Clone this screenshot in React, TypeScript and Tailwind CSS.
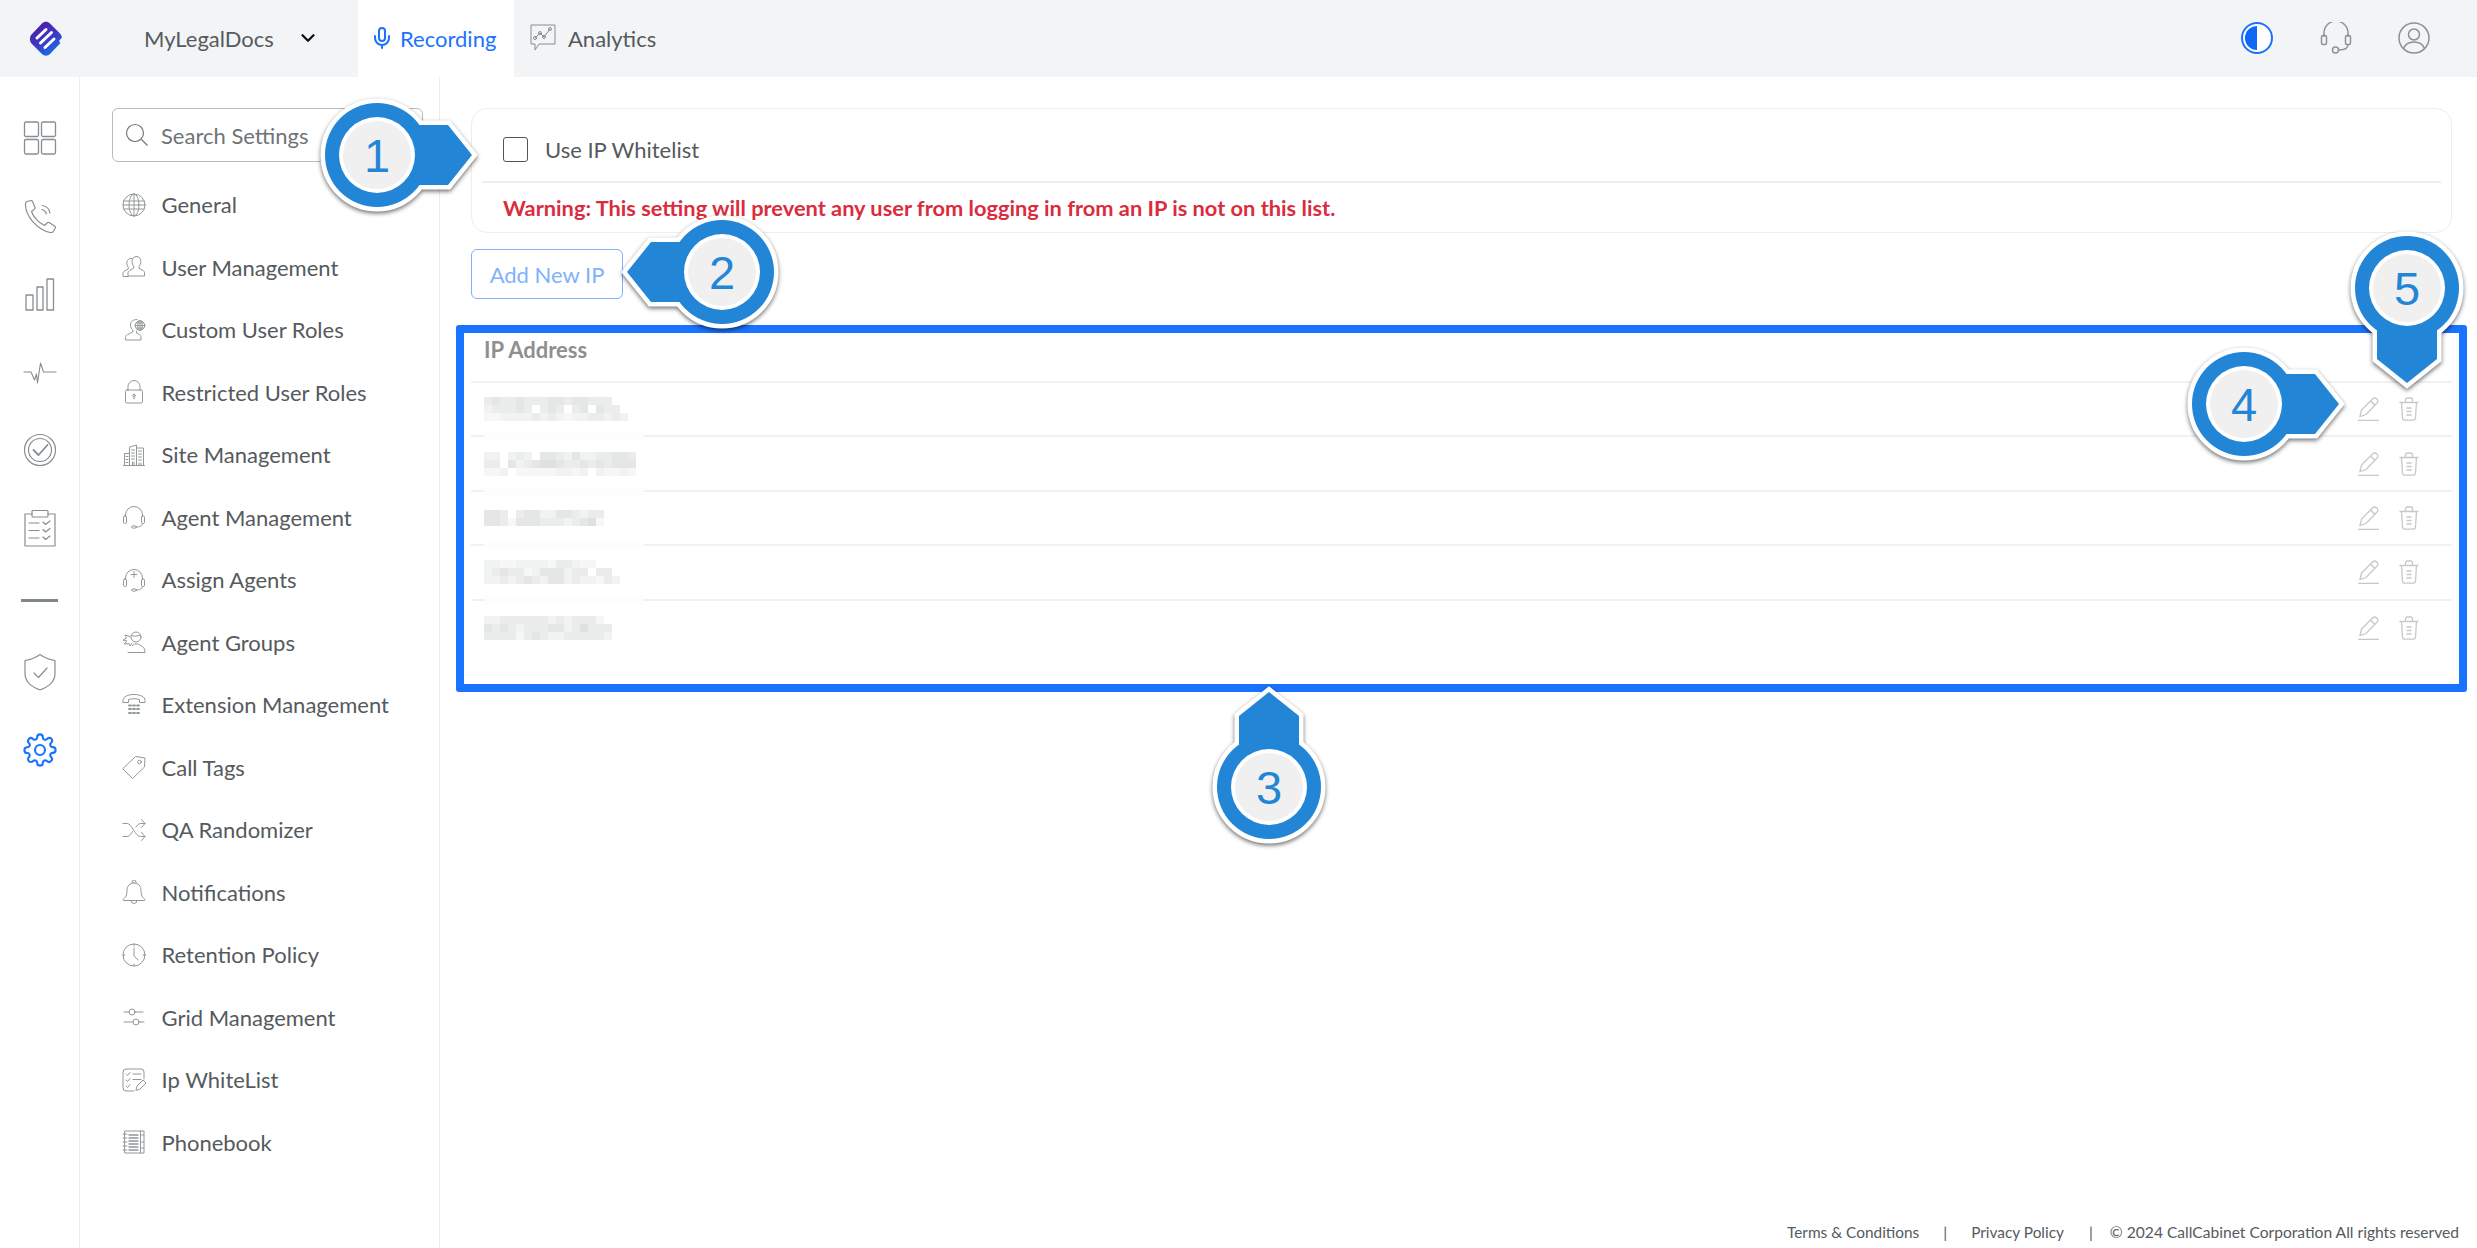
import React from 'react';
import { ChevronDown, Mic } from 'lucide-react';

const Ico: React.FC<{ size?: number; className?: string; sw?: number; children: React.ReactNode; vb?: string }> = ({ size = 24, className = '', sw = 1, children, vb = '0 0 24 24' }) => (
  <svg width={size} height={size} viewBox={vb} fill="none" stroke="currentColor" strokeWidth={sw} strokeLinecap="round" strokeLinejoin="round" className={className}>
    {children}
  </svg>
);

const menuIcons: Record<string, React.ReactNode> = {
  General: (
    <>
      <circle cx="12" cy="12" r="11" />
      <ellipse cx="12" cy="12" rx="5" ry="11" />
      <path d="M12 1v22M1.600 8h20.800M1 12h22M1.600 16h20.800" />
    </>
  ),
  'User Management': (
    <>
      <path d="M14.500 1.500c-3 0-4.500 2-4.500 5 0 2 .7 3.600 1.800 4.600v2l-4.300 2.400c-1 .6-1.500 1.400-1.500 2.500v3h16.500v-3c0-1.100-.4-1.900-1.400-2.500l-4-2.200v-2.200c1-1 1.700-2.600 1.700-4.600 0-3-1.400-5-4.300-5z" />
      <path d="M10 3.500C7 3 4.800 5 4.800 8c0 1.800.6 3.200 1.400 4.200v1.800L2.500 16c-1 .6-1.500 1.400-1.500 2.500v3h5" />
    </>
  ),
  'Custom User Roles': (
    <>
      <path d="M15 1.500c-4 0-6.500 2-6.500 5.500 0 2.500 1 4 2.300 5v2l-5.300 2.500c-1.500.7-2 1.500-2 3V22h15.500v-3c0-1-.5-1.800-1.500-2.300L14.500 15v-2" />
      <circle cx="18" cy="7.500" r="4.800" />
      <path d="M13.200 7.500h9.600M18 2.700v9.600M14.500 5h7M14.500 10h7" />
      <ellipse cx="18" cy="7.500" rx="2.200" ry="4.800" />
    </>
  ),
  'Restricted User Roles': (
    <>
      <rect x="3.500" y="10" width="17" height="13" rx="1.500" />
      <path d="M6 10V6.500a6 6 0 0 1 12 0V10" />
      <circle cx="12" cy="15.500" r="1.300" />
      <path d="M12 16.800V19" />
    </>
  ),
  'Site Management': (
    <>
      <path d="M1.500 22.500h21M2.500 22.500V10.500h5M7.500 22.500V4l7-2v20.500M14.500 5h7v17.500" />
      <path d="M9.500 7h3M9.500 10h3M9.500 13h3M9.500 16h3M16.500 8h3M16.500 11h3M16.500 14h3M16.500 17h3M4 13.500h2M4 16.500h2M4 19.500h2M10.500 19v3.500M12 19v3.500M17 20v2.500M19 20v2.500" />
    </>
  ),
  'Agent Management': (
    <>
      <path d="M3.500 11V10a8.500 8.500 0 0 1 17 0v1" />
      <rect x="1.500" y="11" width="3" height="7.500" rx="1.200" />
      <rect x="19.500" y="11" width="3" height="7.500" rx="1.200" />
      <path d="M20.500 18.500c0 2.500-3 3.500-6 3.500" />
      <ellipse cx="12" cy="22" rx="2.500" ry="1.200" />
    </>
  ),
  'Assign Agents': (
    <>
      <path d="M3.500 11V10a8.500 8.500 0 0 1 17 0v1" />
      <rect x="1.500" y="11" width="3" height="7.500" rx="1.200" />
      <rect x="19.500" y="11" width="3" height="7.500" rx="1.200" />
      <path d="M20.500 18.500c0 2.500-3 3.500-6 3.500M12 3.500v6M9 6.500h6" />
      <ellipse cx="12" cy="22" rx="2.500" ry="1.200" />
    </>
  ),
  'Agent Groups': (
    <>
      <circle cx="14" cy="7" r="5" />
      <path d="M9.500 5.500c2 1 5 1 9-.5M6 22.500h17c0-4-1.500-6-4.500-7l-2-1.500h-4l-2 1.500" />
      <path d="M8 6.500 3 5l1.500 3L1 10l4 1-3 3 5-.5 1 2.500 2-3" />
    </>
  ),
  'Extension Management': (
    <>
      <path d="M1 7.500C1 3.500 6 1.500 12 1.500s11 2 11 6v2h-5.500V6.500c-3-1-8-1-11 0v3H1z" />
      <path d="M7 12.500h2M11 12.500h2M15 12.500h2M7 16h2M11 16h2M15 16h2M7 20h2M11 20h2M15 20h2" strokeWidth="1.800" />
    </>
  ),
  'Call Tags': (
    <>
      <path d="M14 1.500 23 3l-.5 9-12 11.500L1 14z" />
      <circle cx="17.500" cy="7" r="1.800" />
    </>
  ),
  'QA Randomizer': (
    <>
      <path d="M1 5.500h4c5 0 8 13 13.500 13H23M1 18.500h4c2.500 0 4-2.500 5.500-5M14 9c1.300-2 2.700-3.500 4.500-3.500H23M19.500 1.500l3.500 4-3.500 4M19.500 14.500l3.500 4-3.500 4" />
    </>
  ),
  Notifications: (
    <>
      <path d="M12 3c-4.500 0-7 3-7 7.500 0 5-1.500 7-3.500 8.500-.8.700-.4 1.500.5 1.500h20c.9 0 1.300-.8.500-1.500C20.500 17.500 19 15.500 19 10.500 19 6 16.500 3 12 3z" />
      <path d="M10 3V2a2 2 0 0 1 4 0v1M9 20.500a3 3 0 0 0 6 0" />
    </>
  ),
  'Retention Policy': (
    <>
      <circle cx="12" cy="12" r="11" />
      <path d="M12 5v8l4 4M12 1v2M12 21v2M1 12h2M21 12h2" />
    </>
  ),
  'Grid Management': (
    <>
      <circle cx="10" cy="7" r="3" />
      <circle cx="14" cy="17" r="3" />
      <path d="M2 7h5M13 7h8M2 17h9M17 17h5" />
    </>
  ),
  'Ip WhiteList': (
    <>
      <path d="M22 11V4a3 3 0 0 0-3-3H4a3 3 0 0 0-3 3v16a3 3 0 0 0 3 3h8" />
      <path d="m4 6 1.500 1.500L8 4.500M4 12l1.500 1.500L8 10.500M4 18l1.500 1.500L8 16.500M11 6h8M11 11.500h8" />
      <path d="m14 22 1-4 6-6 3 3-6 6z" />
    </>
  ),
  Phonebook: (
    <>
      <rect x="3" y="1" width="19" height="22" />
      <path d="M1 4h4M1 8h4M1 12h4M1 16h4M1 20h4M18.500 1v22M19.500 5h2M19.500 12h2M19.500 18h2" />
      <path d="M7 5h9M7 8h9M7 11h9M7 14h9M7 17h9M7 20h9" strokeWidth="1.300" />
    </>
  ),
};

const menu = Object.keys(menuIcons);

const railIcons: React.ReactNode[] = [
  <Ico size={34} key="grid" sw={1.300} vb="0 0 34 34" className="text-[#868e93]">
    <rect x="1.500" y="1" width="14" height="14.500" rx="1.500" />
    <rect x="18.500" y="1" width="14" height="14.500" rx="1.500" />
    <rect x="1.500" y="18.500" width="14" height="14.500" rx="1.500" />
    <rect x="18.500" y="18.500" width="14" height="14.500" rx="1.500" />
  </Ico>,
  <Ico size={34} key="phone" sw={1.200} vb="0 0 34 34" className="text-[#868e93]">
    <path d="M4 2.500 8 1.500c.8 0 1.200.4 1.500 1L12 8.500c.2.700 0 1.200-.5 1.600L8.500 12.500c1.500 4.500 6.500 11 13 14l2.800-2.700c.5-.5 1.200-.6 1.800-.2l5.700 3.600c.7.500.8 1.100.5 1.800l-1.800 3.200c-.6 1-1.600 1.500-3 1.300C14.500 31 2 17 2.500 5c0-1.200.5-2 1.500-2.500z" />
    <path d="M19 10.500c2.200.5 3.800 2 4.300 4.300M19.500 6.500c3.800.7 6.800 3.400 7.500 7.500" />
  </Ico>,
  <Ico size={34} key="bars" sw={1.300} vb="0 0 34 34" className="text-[#868e93]">
    <rect x="3" y="18" width="7" height="15" />
    <rect x="14" y="10" width="6" height="23" />
    <rect x="24" y="2" width="6.500" height="31" />
  </Ico>,
  <Ico size={34} key="pulse" sw={1.100} vb="0 0 34 34" className="text-[#868e93]">
    <path d="M1 17h7l3.500 8 2-6 1 9L17.500 8l3 9h12.500" />
  </Ico>,
  <Ico size={34} key="check" sw={1.200} vb="0 0 34 34" className="text-[#868e93]">
    <circle cx="17" cy="17" r="15.500" />
    <circle cx="17" cy="17" r="11.500" />
    <path d="m10.500 17 5 5 9-10" strokeWidth="1.800" />
  </Ico>,
  <Ico size={38} key="clip" sw={1.200} vb="0 0 34 38" className="text-[#868e93]">
    <path d="M9 5H2v32h30V5h-7" />
    <rect x="9" y="1.500" width="16" height="6.500" rx="1" />
    <path d="M6 14h10M6 21.500h10M6 29h10M20 13l2.500 2.500L27 12M20 20.500l2.500 2.500 4.500-3.500M20 28l2.500 2.500L27 27" />
  </Ico>,
  'hr',
  <Ico size={38} key="shield" sw={1.200} vb="0 0 34 38" className="text-[#868e93]">
    <path d="M17 1.500c4 3 9 5 15 6v13c0 8-7 13.500-15 16.500C9 34 2 28.500 2 20.500v-13c6-1 11-3 15-6z" />
    <path d="m11 20 4.500 4.500L24 15" />
  </Ico>,
  <Ico size={34} key="gear" sw={1.500} className="text-[#1a73ff]">
    <circle cx="12" cy="12" r="3.500" />
    <path d="M19.400 15a1.700 1.700 0 0 0 .3 1.800l.1.100a2 2 0 1 1-2.900 2.900l-.1-.1a1.700 1.700 0 0 0-2.800 1.200v.1a2 2 0 0 1-4 0V21a1.700 1.700 0 0 0-2.900-1.200l-.1.100a2 2 0 1 1-2.800-2.900l.1-.1a1.700 1.700 0 0 0-1.200-2.800H3a2 2 0 0 1 0-4h.1a1.700 1.700 0 0 0 1.200-2.900l-.1-.1A2 2 0 1 1 7 4.200l.1.100a1.700 1.700 0 0 0 1.800.3H9a1.700 1.700 0 0 0 1-1.500V3a2 2 0 0 1 4 0v.1a1.700 1.700 0 0 0 2.900 1.200l.1-.1a2 2 0 1 1 2.800 2.800l-.1.100a1.700 1.700 0 0 0-.3 1.900V9a1.700 1.700 0 0 0 1.500 1h.1a2 2 0 0 1 0 4H21a1.700 1.700 0 0 0-1.600 1z" />
  </Ico>,
];

// blurred addresses: one string of shades per mosaic line
const shades = ['#ffffff', '#f7f7f7', '#f1f2f2', '#ebecec', '#e5e6e7', '#dfe0e2'];
const blurred = [
  ['343343334434433300', '233343034303404330', '112222323212233232'],
  ['2202320443242233443', '3304234554334343444', '1120111112212021121'],
  ['443034422443233', '443144433323451'],
  ['221122221332110', '234331244423303300', '223234324423221320'],
  ['2233333323233310', '4343233344235333', '3333134322333332'],
];

const Mosaic: React.FC<{ lines: string[] }> = ({ lines }) => (
  <div className="flex flex-col">
    {lines.map((line, i) => (
      <div key={i} className="flex h-2">
        {line.split('').map((c, j) => (
          <span key={j} className="w-2 h-2" style={{ backgroundColor: shades[Number(c)] }} />
        ))}
      </div>
    ))}
  </div>
);

type CalloutProps = { n: number; dir: 'left' | 'right' | 'up' | 'down'; className: string };

const rotation = { right: 0, down: 90, left: 180, up: 270 };

const Callout: React.FC<CalloutProps> = ({ n, dir, className }) => {
  const shape = 'M0 -30 L71 -30 L95 0 L71 30 L0 30 Z';
  return (
    <div className={`absolute w-[220px] h-[220px] z-10 ${className}`}>
      <svg width="220" height="220" viewBox="-110 -110 220 220" className="drop-shadow-[0_2px_2px_rgba(0,0,0,0.55)]">
        <g transform={`rotate(${rotation[dir]})`}>
          <circle r="52" fill="#fff" stroke="#fff" strokeWidth="9" />
          <path d={shape} fill="#fff" stroke="#fff" strokeWidth="9" strokeLinejoin="miter" />
          <circle r="52" fill="#2285d6" />
          <path d={shape} fill="#2285d6" />
          <circle r="38" fill="#fff" />
          <circle r="34" fill="#f0f0f0" />
        </g>
      </svg>
      <span className="absolute inset-0 flex items-center justify-center text-[47px] font-normal leading-none text-[#2285d6] font-['Liberation_Sans',sans-serif]">{n}</span>
    </div>
  );
};

export default function App() {
  return (
    <div className="w-[2477px] h-[1248px] relative overflow-hidden bg-white flex flex-col font-['Lato',sans-serif] text-[22px] text-[#555a5e]">
      <header className="h-[77px] shrink-0 bg-[#f3f4f6] flex items-stretch">
        <div className="w-[144px] flex items-center pl-[27px]">
          <svg width="38" height="38" viewBox="0 0 38 38">
            <defs>
              <linearGradient id="lg" x1="0.2" y1="0.1" x2="0.7" y2="1">
                <stop offset="0" stopColor="#4d1fa8" />
                <stop offset="0.55" stopColor="#3b3cc6" />
                <stop offset="1" stopColor="#1478ee" />
              </linearGradient>
            </defs>
            <path d="M5 14 15 3.500c2.300-2.300 5.700-2.300 8 0l10 10c2.200 2.300 2.400 4.300.8 5.500-2 1.500-2 2.500-.3 4l-10.500 11c-2.300 2.300-5.700 2.300-8 0L5 24c-2.700-2.700-2.700-7.300 0-10z" fill="url(#lg)" />
            <path d="m10 18 9-8.500M13.500 23l11-10.500M18 27.500l9-8.500" stroke="#fff" strokeWidth="3" strokeLinecap="round" fill="none" />
          </svg>
        </div>
        <div className="w-[214px] flex items-center pb-[1px]">
          <span>MyLegalDocs</span>
          <ChevronDown size={22} strokeWidth={2.500} className="ml-[23px] text-[#111]" />
        </div>
        <div className="w-[156px] bg-white flex items-center pl-[12px] pb-[1px] gap-[6px] text-[#1a73ff]">
          <Mic size={24} strokeWidth={2} />
          <span>Recording</span>
        </div>
        <div className="flex items-center pl-[16px] pb-[1px] gap-[12px]">
          <svg width="26" height="28" viewBox="0 0 26 28" fill="none" stroke="#868e93" strokeWidth="1">
            <path d="M1 1h24v19H9l-4 6v-6H1z" />
            <path d="m5 14 5-5 4 4 6-8" />
            <circle cx="5" cy="14" r="1.500" />
            <circle cx="10" cy="9" r="1.500" />
            <circle cx="14" cy="13" r="1.500" />
            <circle cx="20" cy="5" r="1.500" />
          </svg>
          <span>Analytics</span>
        </div>
        <div className="ml-auto flex items-center pr-[47px] pb-[2px] gap-[46px]">
          <svg width="32" height="32" viewBox="0 0 32 32" className="-translate-x-[1px]">
            <circle cx="16" cy="16" r="15" fill="#fff" stroke="#1a73ff" strokeWidth="2" />
            <path d="M16 4a12 12 0 0 0 0 24z" fill="#0f67f5" />
          </svg>
          <svg width="32" height="32" viewBox="0 0 32 32" fill="none" stroke="#8a9297" strokeWidth="1.500">
            <path d="M4 15v-4a12 12 0 0 1 24 0v4" />
            <rect x="1.500" y="13.500" width="5" height="9" rx="1.500" />
            <rect x="25.500" y="13.500" width="5" height="9" rx="1.500" />
            <path d="M28 22.500c0 4-4 5.500-9 5.500" />
            <circle cx="15.500" cy="28" r="3" />
          </svg>
          <svg width="32" height="32" viewBox="0 0 32 32" fill="none" stroke="#8a9297" strokeWidth="1.500">
            <circle cx="16" cy="16" r="15" />
            <circle cx="16" cy="12.500" r="5.500" />
            <path d="M5.500 26.500c1.500-4 5-6.500 10.500-6.500s9 2.500 10.500 6.500" />
          </svg>
        </div>
      </header>

      <div className="flex-1 flex min-h-0">
        <nav className="w-[80px] shrink-0 border-r border-[#ececec] pt-[22px] flex flex-col items-center">
          {railIcons.map((icon, i) =>
            icon === 'hr' ? (
              <div key={i} className="h-[66px] flex items-center">
                <div className="w-[37px] h-[3px] bg-[#7f8789]" />
              </div>
            ) : (
              <div key={i} className="h-[78px] flex items-center justify-center">
                {icon}
              </div>
            ),
          )}
        </nav>

        <aside className="w-[360px] shrink-0 border-r border-[#ececec] pt-[31px] pl-[32px] pr-[16px]">
          <div className="h-[54px] border border-[#b9bcbd] rounded-md flex items-center pl-[12px] gap-[12px] text-[#6f7477]">
            <svg width="24" height="24" viewBox="0 0 24 24" fill="none" stroke="#777" strokeWidth="1.200">
              <circle cx="10" cy="10" r="8.500" />
              <path d="m16.500 16.500 6 6" />
            </svg>
            <span>Search Settings</span>
          </div>
          <ul className="mt-[11.5px]">
            {menu.map((label) => (
              <li key={label} className="h-[62.5px] flex items-center">
                <span className="w-[49.5px] pl-[10px] text-[#92979a]">
                  <Ico size={24}>{menuIcons[label]}</Ico>
                </span>
                <span>{label}</span>
              </li>
            ))}
          </ul>
        </aside>

        <main className="flex-1 pt-[31px] pl-[31px] pr-[25px] flex flex-col min-w-0">
          <section className="h-[125px] border border-[#eeeeee] rounded-[16px] px-[10px]">
            <label className="h-[74px] flex items-center pt-[8px] pl-[21px] gap-[17px] border-b-2 border-[#eeeeee]">
              <span className="w-[25px] h-[25px] border border-[#555] rounded-[3px]" />
              <span>Use IP Whitelist</span>
            </label>
            <p className="pl-[21px] h-[50px] flex items-center text-[21.8px] font-bold text-[#db2c3d]">
              Warning: This setting will prevent any user from logging in from an IP is not on this list.
            </p>
          </section>

          <button className="mt-[16px] w-[152px] h-[50px] border border-[#7fb2fb] rounded-md text-[#7fb2fb]">Add New IP</button>

          <div className="mt-[28px]">
            <div className="h-[56px] border-b-2 border-[#f1f1f1] pl-[13px] flex items-center pb-[10px] font-bold text-[#8f8f8f]">IP Address</div>
            {blurred.map((lines, i) => (
              <div key={i} className={`relative h-[54.4px] pl-[13px] pr-[33px] flex items-center justify-between ${i < 4 ? 'border-b-2 border-[#f1f1f1]' : ''}`}>
                <Mosaic lines={lines} />
                {i < 4 && <span className="absolute left-[13px] -bottom-[5px] w-[160px] h-[8px] bg-[#fdfdfd]" />}
                <div className="flex items-center gap-[19px] text-[#c6c8c9]">
                  <svg width="22" height="24" viewBox="0 0 22 24" fill="none" stroke="currentColor" strokeWidth="1.300">
                    <path d="M2 19.500 3.500 13 14.500 2c1.500-1.300 3-1.200 4.300 0s1.400 3 0 4.300L8 17.500z" />
                    <path d="m12.500 4 4.500 4.500M0 23.500h21" />
                  </svg>
                  <svg width="20" height="24" viewBox="0 0 20 24" fill="none" stroke="currentColor" strokeWidth="1.300">
                    <path d="M.5 5.500h19M6.500 5.500V3c0-1 .7-2 1.800-2h3.400c1.100 0 1.800 1 1.800 2v2.500M2.500 5.500l1 15.500c.1 1.300 1 2.200 2.300 2.200h8.400c1.300 0 2.200-.9 2.300-2.200l1-15.500M7.500 11h5M7.500 14.500h5M7.500 18h5" />
                  </svg>
                </div>
              </div>
            ))}
          </div>

          <footer className="mt-auto -mr-[7px] h-[30px] flex items-center justify-end text-[15.4px] text-[#555a5e]">
            <span>Terms &amp; Conditions</span>
            <span className="mx-[24px]">|</span>
            <span>Privacy Policy</span>
            <span className="ml-[25px] mr-[17px]">|</span>
            <span className="text-[15.6px]">© 2024 CallCabinet Corporation All rights reserved</span>
          </footer>
        </main>
      </div>

      <div className="absolute left-[456px] top-[325px] w-[2011px] h-[367px] border-[8px] border-[#1a73ff] rounded-[3px]" />
      <Callout n={1} dir="right" className="left-[267px] top-[45px]" />
      <Callout n={2} dir="left" className="left-[612px] top-[162px]" />
      <Callout n={3} dir="up" className="left-[1159px] top-[677px]" />
      <Callout n={4} dir="right" className="left-[2134px] top-[294px]" />
      <Callout n={5} dir="down" className="left-[2297px] top-[178px]" />
    </div>
  );
}
